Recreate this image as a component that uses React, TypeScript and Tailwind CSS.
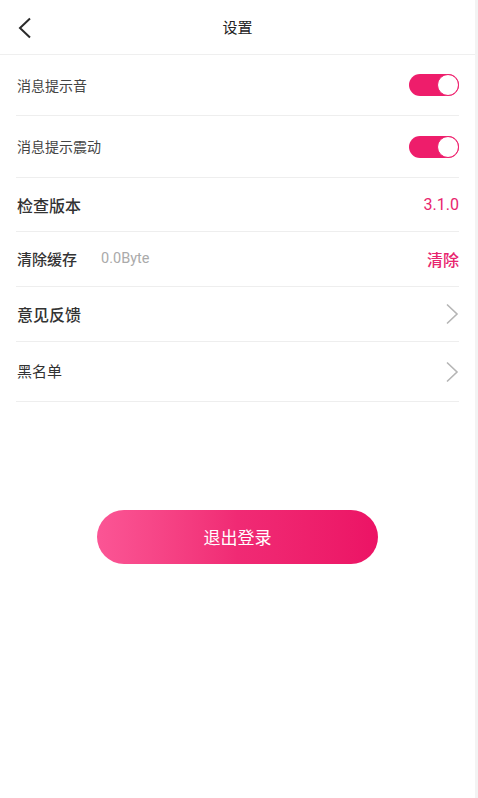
import React from "react";

const Toggle = () => (
  <div className="relative w-[50px] h-[22px] rounded-full bg-[#ee1d6b]">
    <div className="absolute right-0 top-0 w-[22px] h-[22px] rounded-full bg-white border border-[#ee1d6b]" />
  </div>
);

const Chevron = () => (
  <svg width="14" height="22" viewBox="0 0 14 22" fill="none">
    <path d="M2 1.5 L12 11 L2 20.5" stroke="#b5b5b5" strokeWidth="1.6" />
  </svg>
);

const Row = ({ h, children }: { h: string; children: React.ReactNode }) => (
  <div className={`flex items-center justify-between border-b border-[#eeeeee] ${h}`}>{children}</div>
);

export default function App() {
  return (
    <div
      className="w-[478px] h-[798px] bg-white flex"
      style={{ fontFamily: '"Noto Sans CJK SC", "Noto Sans", sans-serif' }}
    >
      <div className="w-[475px] flex flex-col">
        <div className="h-[55px] flex items-center justify-center relative border-b border-[#efefef]">
          <svg className="absolute left-[17px] top-[17px]" width="16" height="22" viewBox="0 0 16 22" fill="none">
            <path d="M13 1.5 L3 11 L13 20.5" stroke="#2a2a2a" strokeWidth="2" />
          </svg>
          <span className="text-[15px] text-[#222]">设置</span>
        </div>
        <div className="ml-[16px] flex flex-col pr-[16px]">
          <Row h="h-[61px]">
            <span className="text-[14px] text-[#444] ml-[1px]">消息提示音</span>
            <Toggle />
          </Row>
          <Row h="h-[62px]">
            <span className="text-[14px] text-[#444] ml-[1px]">消息提示震动</span>
            <Toggle />
          </Row>
          <Row h="h-[54px]">
            <span className="text-[16px] font-medium text-[#333] ml-[1px]">检查版本</span>
            <span className="text-[16px] text-[#e8246e]" style={{ fontFamily: "Roboto, sans-serif" }}>3.1.0</span>
          </Row>
          <Row h="h-[55px]">
            <div className="flex items-center ml-[1px]">
              <span className="text-[15px] font-medium text-[#333]">清除缓存</span>
              <span className="ml-[24px] text-[14.5px] text-[#aaaaaa]" style={{ fontFamily: "Roboto, sans-serif" }}>0.0Byte</span>
            </div>
            <span className="text-[16px] font-medium text-[#e8246e]">清除</span>
          </Row>
          <Row h="h-[55px]">
            <span className="text-[16px] font-medium text-[#333] ml-[1px]">意见反馈</span>
            <Chevron />
          </Row>
          <Row h="h-[60px]">
            <span className="text-[15px] text-[#333] ml-[1px]">黑名单</span>
            <Chevron />
          </Row>
        </div>
        <div className="flex justify-center mt-[108px]">
          <div className="w-[281px] h-[54px] rounded-full bg-gradient-to-r from-[#fb5595] via-[#f02a74] to-[#ec1365] flex items-center justify-center">
            <span className="text-[17px] text-white">退出登录</span>
          </div>
        </div>
      </div>
      <div className="w-[3px] bg-[#f3f3f3]" />
    </div>
  );
}
